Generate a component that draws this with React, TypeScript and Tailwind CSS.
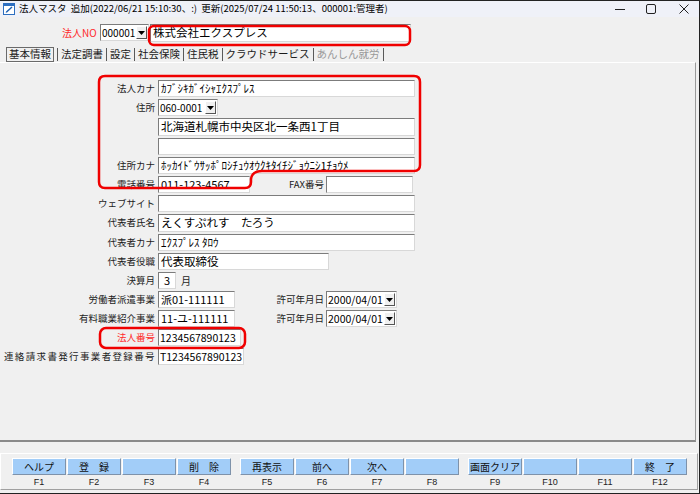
import type { ReactNode } from "react"

const jp = "font-['Noto_Sans_CJK_JP','Noto_Sans',sans-serif]"

const field =
  "h-[17px] bg-white border border-t-[#7c7c7c] border-l-[#7c7c7c] border-b-[#d8d8d8] border-r-[#d8d8d8] flex items-center px-[2px] overflow-hidden whitespace-nowrap text-black"

function Arrow() {
  return (
    <div className="ml-auto flex h-[13px] w-[11px] shrink-0 items-center justify-center border border-t-white border-l-white border-b-[#555] border-r-[#555] bg-[#f0f0f0]">
      <svg width="7" height="4" viewBox="0 0 7 4">
        <path d="M0 0 H7 L3.5 4 Z" fill="#000" />
      </svg>
    </div>
  )
}

function Row({
  label,
  red,
  wide,
  tall,
  children,
}: {
  label?: string
  red?: boolean
  wide?: boolean
  tall?: boolean
  children: ReactNode
}) {
  return (
    <div className={`flex items-center ${tall ? "h-[20px]" : "h-[19px]"}`}>
      <div
        className={`w-[151px] shrink-0 whitespace-nowrap text-right text-[9.5px] leading-none ${
          red ? "text-[#ff2a2a]" : "text-[#1c1c1c]"
        } ${wide ? "tracking-[1.35px]" : ""}`}
      >
        {label}
      </div>
      <div className="ml-[3px] flex items-center">{children}</div>
    </div>
  )
}

function Tab({ children, off }: { children: ReactNode; off?: boolean }) {
  return (
    <span className={`text-[10.5px] leading-none ${off ? "text-[#9a9a9a]" : "text-[#1a1a1a]"}`}>
      {children}
    </span>
  )
}

function Sep() {
  return <span className="mx-[3px] h-[13px] w-px bg-[#5a5a5a]" />
}

const fkeys = [
  ["ヘルプ", "登　録", "", "削　除"],
  ["再表示", "前へ", "次へ", ""],
  ["画面クリア", "", "", "終　了"],
]

export default function App() {
  return (
    <div
      className={`${jp} relative flex h-[494px] w-[700px] flex-col overflow-hidden border-t border-r border-b border-[#222] bg-[#f0f0f0]`}
    >
      {/* title bar */}
      <div className="flex h-[16px] shrink-0 items-center bg-[#eff1f8] pl-[3px]">
        <svg width="12" height="12" viewBox="0 0 12 12">
          <rect x="0.5" y="0.5" width="11" height="11" fill="#fff" stroke="#2d6fc0" />
          <rect x="0.5" y="0.5" width="11" height="2.5" fill="#2d6fc0" />
          <path d="M3 8.5 L8.5 3.5 L9.5 4.5 L4 9.5 L2.7 9.8 Z" fill="#1d5fb0" />
        </svg>
        <span className="ml-[4px] whitespace-nowrap text-[9.5px] leading-none text-black">
          法人マスタ&nbsp;&nbsp;追加(2022/06/21 15:10:30、:)&nbsp;&nbsp;更新(2025/07/24 11:50:13、000001:管理者)
        </span>
        <div className="ml-auto flex items-center pr-[10px]">
          <svg width="10" height="10" viewBox="0 0 10 10">
            <path d="M0 5.5 H10" stroke="#222" strokeWidth="1" />
          </svg>
          <svg className="ml-[21px]" width="10" height="10" viewBox="0 0 10 10">
            <rect x="0.5" y="0.5" width="9" height="9" rx="1.5" fill="none" stroke="#222" />
          </svg>
          <svg className="ml-[23px]" width="10" height="10" viewBox="0 0 10 10">
            <path d="M0.5 0.5 L9.5 9.5 M9.5 0.5 L0.5 9.5" stroke="#222" strokeWidth="1" />
          </svg>
        </div>
      </div>

      {/* header */}
      <div className="flex h-[30px] shrink-0 items-center pl-[62px] pt-[1px]">
        <span className="w-[37px] whitespace-nowrap text-[10px] leading-none text-[#ff2a2a]">法人NO</span>
        <div className={`${field} ml-[1px] h-[17px] w-[49px] pl-[1px] pr-[1px] text-[10px]`}>
          000001
          <Arrow />
        </div>
        <div className={`${field} ml-[1px] h-[18px] w-[261px] text-[11.5px]`}>株式会社エクスプレス</div>
      </div>

      {/* tabs */}
      <div className="flex h-[15px] shrink-0 items-center pl-[6px]">
        <span className="flex h-[15px] items-center border border-[#6a6a6a] px-[2px] text-[10.5px] leading-none text-[#1a1a1a]">
          基本情報
        </span>
        <Sep />
        <Tab>法定調書</Tab>
        <Sep />
        <Tab>設定</Tab>
        <Sep />
        <Tab>社会保険</Tab>
        <Sep />
        <Tab>住民税</Tab>
        <Sep />
        <Tab>クラウドサービス</Tab>
        <Sep />
        <Tab off>あんしん就労</Tab>
        <Sep />
      </div>

      {/* panel */}
      <div className="mr-[3px] h-[380px] shrink-0 border-t border-r border-b-2 border-t-white border-r-[#9a9a9a] border-b-[#8a8a8a] pl-[4px] pt-[16px]">
        <Row label="法人カナ">
          <div className={`${field} w-[257px] text-[11px]`}>ｶﾌﾞｼｷｶﾞｲｼｬｴｸｽﾌﾟﾚｽ</div>
        </Row>
        <Row label="住所">
          <div className={`${field} w-[60px] pl-[1px] pr-[1px] text-[10px]`}>
            060-0001
            <Arrow />
          </div>
        </Row>
        <Row tall>
          <div className={`${field} h-[18px] w-[257px] text-[11.5px]`}>北海道札幌市中央区北一条西1丁目</div>
        </Row>
        <Row>
          <div className={`${field} w-[257px]`} />
        </Row>
        <Row label="住所カナ">
          <div className={`${field} w-[257px] text-[11px]`}>ﾎｯｶｲﾄﾞｳｻｯﾎﾟﾛｼﾁｭｳｵｳｸｷﾀｲﾁｼﾞｮｳﾆｼ1ﾁｮｳﾒ</div>
        </Row>
        <Row label="電話番号">
          <div className={`${field} w-[92px] text-[11px]`}>011-123-4567</div>
          <div className="w-[76px] pr-[2px] text-right text-[9.5px] leading-none text-[#1c1c1c]">FAX番号</div>
          <div className={`${field} w-[87px]`} />
        </Row>
        <Row label="ウェブサイト">
          <div className={`${field} w-[257px]`} />
        </Row>
        <Row label="代表者氏名" tall>
          <div className={`${field} h-[18px] w-[257px] text-[11.5px]`}>えくすぷれす　たろう</div>
        </Row>
        <Row label="代表者カナ">
          <div className={`${field} w-[257px] text-[11px]`}>ｴｸｽﾌﾟﾚｽ ﾀﾛｳ</div>
        </Row>
        <Row label="代表者役職">
          <div className={`${field} w-[171px] text-[11.5px]`}>代表取締役</div>
        </Row>
        <Row label="決算月">
          <div className={`${field} w-[18px] justify-center text-[11px]`}>3</div>
          <span className="ml-[5px] text-[10px] leading-none text-[#1c1c1c]">月</span>
        </Row>
        <Row label="労働者派遣事業">
          <div className={`${field} w-[77px] text-[11px]`}>派01-111111</div>
          <div className="w-[91px] pr-[2px] text-right text-[9.5px] leading-none text-[#1c1c1c]">許可年月日</div>
          <div className={`${field} w-[71px] pl-[1px] pr-[1px] text-[10.5px]`}>
            2000/04/01
            <Arrow />
          </div>
        </Row>
        <Row label="有料職業紹介事業">
          <div className={`${field} w-[77px] text-[11px]`}>11-ユ-111111</div>
          <div className="w-[91px] pr-[2px] text-right text-[9.5px] leading-none text-[#1c1c1c]">許可年月日</div>
          <div className={`${field} w-[71px] pl-[1px] pr-[1px] text-[10.5px]`}>
            2000/04/01
            <Arrow />
          </div>
        </Row>
        <Row label="法人番号" red>
          <div className={`${field} w-[83px] pl-[1px] text-[10.5px]`}>1234567890123</div>
        </Row>
        <Row label="連絡請求書発行事業者登録番号" wide>
          <div className={`${field} w-[86px] pl-[1px] text-[10.5px]`}>T1234567890123</div>
        </Row>
      </div>

      {/* function keys */}
      <div className="mr-[1px] mt-[11px] h-[37px] shrink-0 border border-t-white border-l-white border-b-[#a0a0a0] border-r-[#a0a0a0] pl-[11px] pt-[4px]">
        <div className="flex gap-[9px]">
          {fkeys.map((group, gi) => (
            <div key={gi} className="flex gap-px">
              {group.map((label, i) => (
                <div key={i} className="flex w-[54px] flex-col items-center">
                  <div className="flex h-[17px] w-full items-center justify-center border border-t-white border-l-white border-b-[#7e92aa] border-r-[#7e92aa] bg-[#a2cdf8] text-[10px] leading-none text-[#111]">
                    {label}
                  </div>
                  <div className="mt-[3px] font-['Liberation_Sans',sans-serif] text-[9px] leading-none text-[#222]">
                    F{gi * 4 + i + 1}
                  </div>
                </div>
              ))}
            </div>
          ))}
        </div>
      </div>

      {/* red annotations */}
      <svg
        className="pointer-events-none absolute -top-px left-0"
        width="700"
        height="494"
        viewBox="0 0 700 494"
        fill="none"
        stroke="#f00000"
        strokeWidth="2.5"
      >
        <rect x="149" y="26" width="261" height="19" rx="5" />
        <path d="M105 76 H414 Q420 76 420 82 V165 Q420 171 414 171 H262 Q252 171 251 179 V182 Q251 188 245 188 H105 Q99 188 99 182 V82 Q99 76 105 76 Z" />
        <rect x="100" y="328" width="145" height="20" rx="6" />
      </svg>
    </div>
  )
}
